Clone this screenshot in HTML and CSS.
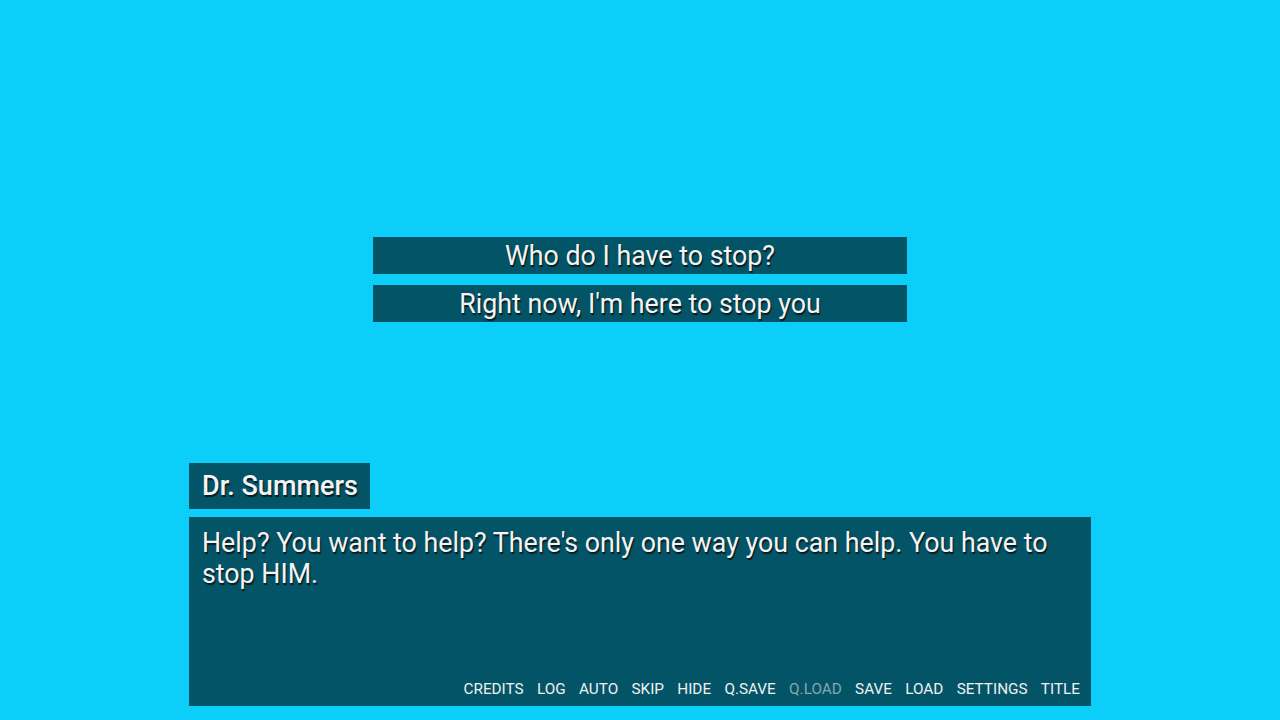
FILE: index.html
```html
<!DOCTYPE html>
<html>
<head>
<meta charset="utf-8">
<link rel="stylesheet" href="styles.css">
</head>
<body>
<div class="screen">
  <div class="choices">
    <div class="choice">Who do I have to stop?</div>
    <div class="choice">Right now, I'm here to stop you</div>
  </div>
  <div class="dialogue">
    <div class="namebox">Dr. Summers</div>
    <div class="textbox">
      <p class="say">Help? You want to help? There's only one way you can help. You have to stop HIM.</p>
      <nav class="menu">
        <span>CREDITS</span>
        <span>LOG</span>
        <span>AUTO</span>
        <span>SKIP</span>
        <span>HIDE</span>
        <span>Q.SAVE</span>
        <span class="disabled">Q.LOAD</span>
        <span>SAVE</span>
        <span>LOAD</span>
        <span>SETTINGS</span>
        <span>TITLE</span>
      </nav>
    </div>
  </div>
</div>
</body>
</html>
```

FILE: styles.css
```css
html, body {
  margin: 0;
  padding: 0;
}
body {
  background: #0bcff8;
  font-family: Roboto, "Liberation Sans", sans-serif;
  color: #f4f4f4;
}
.screen {
  width: 1280px;
  height: 720px;
  display: flex;
  flex-direction: column;
  box-sizing: border-box;
  padding-top: 237px;
  padding-bottom: 14px;
}
.choices {
  display: flex;
  flex-direction: column;
  align-items: center;
  gap: 11px;
}
.choice {
  width: 534px;
  height: 37px;
  background: #045467;
  font-size: 26.8px;
  line-height: 39px;
  text-align: center;
  text-shadow: 1px 2px 1px #0a1a1e;
}
.dialogue {
  margin-top: auto;
  margin-left: 189px;
  display: flex;
  flex-direction: column;
  align-items: flex-start;
  gap: 8px;
}
.namebox {
  width: 181px;
  height: 46px;
  box-sizing: border-box;
  padding-left: 13px;
  background: #045467;
  font-size: 27px;
  font-weight: 500;
  line-height: 46px;
  text-shadow: 1px 2px 1px #0a1a1e;
}
.textbox {
  width: 902px;
  height: 189px;
  box-sizing: border-box;
  background: #045467;
  padding: 11px 11px 7px 13px;
  display: flex;
  flex-direction: column;
}
.say {
  margin: 0;
  font-size: 26.8px;
  line-height: 31px;
  text-shadow: 1px 2px 1px #0a1a1e;
}
.menu {
  margin-top: auto;
  display: flex;
  justify-content: flex-end;
  gap: 13.3px;
  font-size: 15.3px;
  line-height: 20px;
  color: #f0f0f0;
}
.menu .disabled {
  color: #86a7b1;
}
```
